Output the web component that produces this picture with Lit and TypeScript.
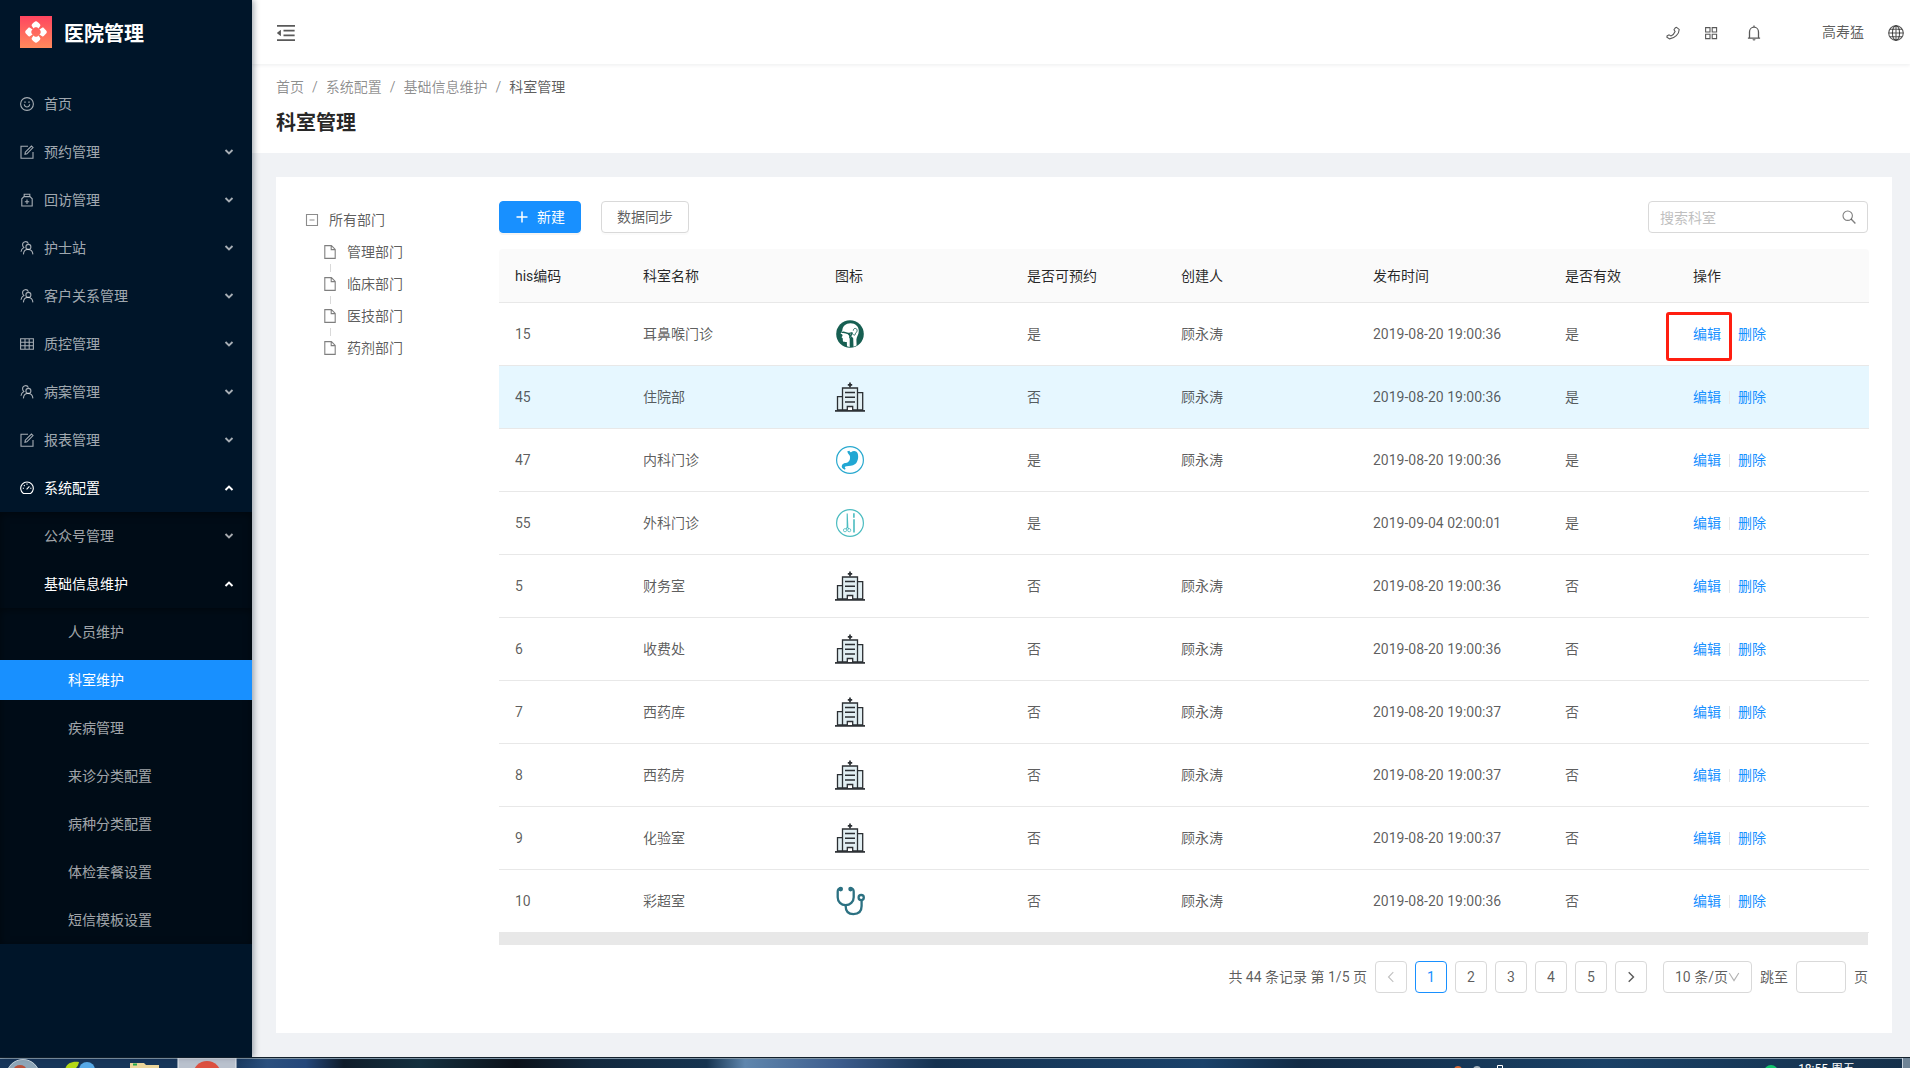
import { LitElement, html, svg, css, nothing } from "lit";
import { customElement, state } from "lit/decorators.js";
import { classMap } from "lit/directives/class-map.js";

type MenuItem = {
  label: string;
  icon?: string;
  open?: boolean;
  expandable?: boolean;
  selected?: boolean;
  children?: MenuItem[];
};

const MENU: MenuItem[] = [
  { label: "首页", icon: "smile" },
  { label: "预约管理", icon: "form", expandable: true },
  { label: "回访管理", icon: "kit", expandable: true },
  { label: "护士站", icon: "team", expandable: true },
  { label: "客户关系管理", icon: "team", expandable: true },
  { label: "质控管理", icon: "table", expandable: true },
  { label: "病案管理", icon: "team", expandable: true },
  { label: "报表管理", icon: "form", expandable: true },
  {
    label: "系统配置",
    icon: "dashboard",
    expandable: true,
    open: true,
    children: [
      { label: "公众号管理", expandable: true },
      {
        label: "基础信息维护",
        expandable: true,
        open: true,
        children: [
          { label: "人员维护" },
          { label: "科室维护", selected: true },
          { label: "疾病管理" },
          { label: "来诊分类配置" },
          { label: "病种分类配置" },
          { label: "体检套餐设置" },
          { label: "短信模板设置" },
        ],
      },
    ],
  },
];

type Row = {
  code: string;
  name: string;
  icon: string;
  bookable: string;
  creator: string;
  time: string;
  valid: string;
};

const T36 = "2019-08-20 19:00:36";
const T37 = "2019-08-20 19:00:37";
const ROWS: Row[] = [
  { code: "15", name: "耳鼻喉门诊", icon: "ent", bookable: "是", creator: "顾永涛", time: T36, valid: "是" },
  { code: "45", name: "住院部", icon: "hospital", bookable: "否", creator: "顾永涛", time: T36, valid: "是" },
  { code: "47", name: "内科门诊", icon: "stomach", bookable: "是", creator: "顾永涛", time: T36, valid: "是" },
  { code: "55", name: "外科门诊", icon: "surgery", bookable: "是", creator: "", time: "2019-09-04 02:00:01", valid: "是" },
  { code: "5", name: "财务室", icon: "hospital", bookable: "否", creator: "顾永涛", time: T36, valid: "否" },
  { code: "6", name: "收费处", icon: "hospital", bookable: "否", creator: "顾永涛", time: T36, valid: "否" },
  { code: "7", name: "西药库", icon: "hospital", bookable: "否", creator: "顾永涛", time: T37, valid: "否" },
  { code: "8", name: "西药房", icon: "hospital", bookable: "否", creator: "顾永涛", time: T37, valid: "否" },
  { code: "9", name: "化验室", icon: "hospital", bookable: "否", creator: "顾永涛", time: T37, valid: "否" },
  { code: "10", name: "彩超室", icon: "steth", bookable: "否", creator: "顾永涛", time: T36, valid: "否" },
];

const COLUMNS = ["his编码", "科室名称", "图标", "是否可预约", "创建人", "发布时间", "是否有效", "操作"];

const line = (w: number, h: number, body: unknown) => html`<svg
  width=${w}
  height=${h}
  viewBox="0 0 ${w} ${h}"
  fill="none"
  stroke="currentColor"
  stroke-width="1.1"
  aria-hidden="true"
>${body}</svg>`;

const ICONS: Record<string, unknown> = {
  smile: line(14, 14, svg`<circle cx="7" cy="7" r="6.4"/><path d="M4.2 7.4C4.6 9 5.6 10 7 10s2.4-1 2.8-2.6"/><path d="M4.3 5.2h1.4M8.3 5.2h1.4" stroke-width="1.3"/>`),
  form: line(14, 14, svg`<path d="M8 1.2H1v12h12V7"/><path d="M5 9.2l.3-2L11.4 1l1.6 1.6L6.9 8.8z"/>`),
  kit: line(14, 14, svg`<path d="M1.8 13V5.8L4 3.6h6l2.2 2.2V13zM4.2 3.4V1.2h5.6v2.2M4.8 8.8h4.4M7 6.6V11"/>`),
  team: line(14, 14, svg`<path d="M2.6 3.8a3 3 0 0 1 5.8-1.2M2.6 3.8a3 3 0 0 0 1.2 2.6C2.2 7.2 1.2 8.8 1 10.8"/><circle cx="8.4" cy="5.9" r="2.5"/><path d="M3.4 13.4c.2-3 1.8-4.9 4.4-4.900 3 0 4.900 2 5.100 4.900"/>`),
  table: line(14, 14, svg`<path d="M.6 1.700h12.800v10.600H.6zM.6 5.200h12.800M.6 8.700h12.800M5 1.700v10.600M9.200 1.700v10.600"/>`),
  dashboard: line(14, 14, svg`<path d="M3.400 12.500a6.300 6.300 0 1 1 7.200 0z"/><path d="M6.600 8.400l2.800-3M2.800 7.300h1.200M10.200 7.300h1.200M7 2.600v1.200M3.900 4.200l.8.8"/>`),
  down: html`<svg width="10" height="10" viewBox="0 0 10 10" fill="none" stroke="currentColor" stroke-width="1.900" aria-hidden="true"><path d="M1.500 3L5 6.400 8.500 3"/></svg>`,
  up: html`<svg width="10" height="10" viewBox="0 0 10 10" fill="none" stroke="currentColor" stroke-width="2" aria-hidden="true"><path d="M1.500 7L5 3.600 8.500 7"/></svg>`,
  fold: html`<svg width="18" height="16" viewBox="112 160 800 704" fill="currentColor" aria-hidden="true"><path d="M408 442h480c4.400 0 8-3.600 8-8v-56c0-4.400-3.600-8-8-8H408c-4.400 0-8 3.600-8 8v56c0 4.400 3.600 8 8 8zm-8 204c0 4.400 3.600 8 8 8h480c4.400 0 8-3.600 8-8v-56c0-4.400-3.600-8-8-8H408c-4.400 0-8 3.600-8 8v56zM904 160H120c-4.400 0-8 3.600-8 8v56c0 4.400 3.600 8 8 8h784c4.400 0 8-3.600 8-8v-56c0-4.400-3.600-8-8-8zm0 632H120c-4.400 0-8 3.600-8 8v56c0 4.400 3.600 8 8 8h784c4.400 0 8-3.600 8-8v-56c0-4.400-3.600-8-8-8zM115.400 518.900L271.700 642c5.800 4.600 14.400.5 14.400-6.900V388.900c0-7.400-8.500-11.500-14.400-6.900L115.400 505.100a8.740 8.740 0 0 0 0 13.800z"/></svg>`,
  phone: line(14, 14, svg`<path d="M9.400 1.800l1.100-.5 2.700 2.100c-.1 4.600-4.400 9-9.600 9.500L.9 11.300l.2-1.400 1.900-1.100 1.900 1.100c1.900-.7 3.400-2.300 4.200-4.400L8 3.800z"/>`),
  grid: line(14, 14, svg`<path d="M1.600 1.600h4.400V6H1.600zM8.200 1.600h4.400V6H8.200zM1.600 8.200h4.400v4.400H1.600zM8.200 8.200h4.400v4.400H8.200z"/>`),
  bell: line(14, 16, svg`<path d="M2.500 13V7a4.500 4.800 0 0 1 9 0v6M.9 13.100h12.200M7 .4v1.800" stroke-width="1.300"/><path d="M5.500 14.200a1.500 1.300 0 0 0 3 0z" fill="currentColor" stroke="none"/>`),
  globe: line(16, 16, svg`<circle cx="8" cy="8" r="7.300"/><ellipse cx="8" cy="8" rx="3.600" ry="7.300"/><path d="M8 .7v14.600M.7 8h14.600M1.800 4.300h12.400M1.800 11.700h12.400"/>`),
  minus: line(14, 14, svg`<path d="M1.500 1.500h11v11h-11zM4.500 7h5"/>`),
  file: line(12, 14, svg`<path d="M.8.600h6.600l3.800 3.800v9H.8zM7.200.600v4h4"/>`),
  plus: html`<svg width="12" height="12" viewBox="0 0 12 12" fill="none" stroke="currentColor" stroke-width="1.500" aria-hidden="true"><path d="M6 .5v11M.5 6h11"/></svg>`,
  search: line(14, 14, svg`<circle cx="5.700" cy="5.700" r="4.700"/><path d="M9.100 9.100l4.300 4.300" stroke-width="1.400"/>`),
  left: line(12, 12, svg`<path d="M8.300 1.200L3.500 6l4.800 4.800"/>`),
  right: line(12, 12, svg`<path d="M3.700 1.200L8.500 6l-4.800 4.800" stroke-width="1.400"/>`),
  caret: line(12, 12, svg`<path d="M1.200 2L6 9.600 10.800 2"/>`),
  logo: html`<svg width="32" height="32" viewBox="0 0 32 32" aria-hidden="true">
    <defs><linearGradient id="lg" x1="0" y1="0" x2="0" y2="1"><stop offset="0" stop-color="#ff4560"/><stop offset="1" stop-color="#ff8a5c"/></linearGradient></defs>
    <rect width="32" height="32" fill="url(#lg)"/>
    <g fill="#fff">
      <path id="petal" d="M16 5.200c1.200 0 2.400 1.400 4 3 .5.600.5 1.200.2 1.700l-1.700 2.700c-.6-.8-1.500-1.300-2.500-1.300s-1.900.5-2.500 1.300l-1.700-2.700c-.3-.5-.3-1.100.2-1.700 1.600-1.600 2.800-3 4-3z"/>
      <use href="#petal" transform="rotate(90 16 16)"/>
      <use href="#petal" transform="rotate(180 16 16)"/>
      <use href="#petal" transform="rotate(270 16 16)"/>
    </g></svg>`,
  hospital: html`<svg width="30" height="30" viewBox="0 0 30 30" fill="none" stroke="#2b2f33" stroke-width="1.300" aria-hidden="true">
    <path d="M2.500 28V14.600h5V28zM22.500 28V10.600h5.200V28zM7.500 28V6h15v22z" fill="#e2eff3"/>
    <path d="M15 .5v5M12.800 2.800h4.400" stroke-width="1.700"/>
    <path d="M10 10.600h10M10 15.200h10M10 19.900h10" stroke-width="1.500"/>
    <path d="M12.300 28.500v-4h5.400v4" fill="#fff"/><path d="M0 28.900h30" stroke-width="1.700"/></svg>`,
  ent: html`<svg width="30" height="30" viewBox="0 0 30 30" aria-hidden="true">
    <circle cx="15" cy="15" r="13.800" fill="#175f52"/>
    <path d="M15.500 4.200c4.900 0 8.300 3.200 8.300 7.700 0 3.600-2.200 5.600-2.400 8.500l.2 6.100-3.100 1.200-.3-8.500-1.700-1.900-1.800 1.900v8.700l-2.700-.7-.2-4.300c-1.700.1-3.700.2-3.900-.8l-.2-2.900-1.200-.9 1.100-1.600-.5-1.400-1.500-.6 1.700-3.300C7.600 7.200 10.800 4.200 15.500 4.200z" fill="#fff"/>
    <path d="M6.500 13.500c3-1 4.400.6 6.500.9 1.700.2 2.700-.7 4.500-.7M14.800 14.200v5M13 14.500l2.500 2.700 2-3" fill="none" stroke="#175f52" stroke-width="1.300"/>
    <path d="M18.300 11.600c0-3 4-2.800 3.800 0-.1 1.900-1.700 2-1.900 3.700-.3 1.300-1.600 1.200-1.900.1" fill="#fff" stroke="#175f52" stroke-width=".9"/></svg>`,
  stomach: html`<svg width="30" height="30" viewBox="0 0 30 30" aria-hidden="true">
    <circle cx="15" cy="15" r="13.400" fill="#fff" stroke="#29a9cf" stroke-width="1.200"/>
    <path d="M12.300 6.300l2.300-.5c.1 1.200.8 1.700 1.800 1.200 1.600-1.700 5.100-1.600 6.200 1.200 1.300 3.700.3 8.500-2.400 10.900-2.800 2.300-6 1.900-8.700 2.100-1.800.2-2.300 1.600-.8 2.300l-.8 1.200C7 23.700 6.100 21.500 7.100 19.900c1.400-2.400 4.400-1.500 6-2.900 1.600-1.300 2.200-3.400 1.900-5.600-.2-1.900-2.400-2.300-2.700-5.100z" fill="#22a7d3"/></svg>`,
  surgery: html`<svg width="30" height="30" viewBox="0 0 30 30" fill="none" stroke="#4bbcc0" aria-hidden="true">
    <circle cx="15" cy="15" r="13.400" fill="#fff" stroke-width="1.200"/>
    <path d="M12.200 5.500v13.600M12.200 5.500l.6 13-1.800 2.300M12 18.500l1.800 2.300" stroke-width="1.100"/>
    <circle cx="10" cy="22.200" r="1.600" stroke-width=".8"/><circle cx="14.200" cy="22.200" r="1.600" stroke-width=".8"/>
    <path d="M18.900 5.200v4.600M19 11.200v13.300" stroke-width="1.600"/></svg>`,
  steth: html`<svg width="30" height="30" viewBox="0 0 30 30" fill="none" stroke="#2c7182" stroke-width="2.300" stroke-linecap="round" aria-hidden="true">
    <path d="M5.300 2.700C2.900 2.700 2.700 3.700 2.700 5.800v5.400c0 4.600 3.400 8 7.900 8s8.100-3.400 8.100-8V5.800c0-2.100-.3-3.100-2.700-3.100"/>
    <path d="M10.600 19.400c0 5.700 2.800 8.700 7.800 8.700 5.400 0 8.200-3 8.200-8v-5"/>
    <circle cx="5.700" cy="3.100" r="1.200" fill="#2c7182"/><circle cx="15.600" cy="3.100" r="1.200" fill="#2c7182"/><circle cx="26.200" cy="11.600" r="2.600"/></svg>`,
};

const FONT = css`Roboto, "Noto Sans CJK SC", sans-serif`;

@customElement("side-menu")
export class SideMenu extends LitElement {
  static styles = css`
    :host { display: block; font-family: ${FONT}; font-size: 14px; color: rgba(255, 255, 255, 0.65); }
    .logo { display: flex; align-items: center; gap: 12px; height: 64px; padding-left: 20px; color: #fff; text-decoration: none; }
    .logo svg { flex: none; }
    .title { margin: 4px 0 0; font-size: 20px; line-height: 32px; font-weight: 600; }
    .menu, .sub { list-style: none; margin: 0; padding: 0; }
    .menu { padding: 16px 0; }
    .entry { padding: 4px 0; }
    .item { display: flex; align-items: center; gap: 10px; box-sizing: border-box; width: 100%; height: 40px; padding: 0 18px 0 20px; border: 0; background: none; color: inherit; font: inherit; line-height: 40px; text-align: left; text-decoration: none; cursor: pointer; }
    .item svg { flex: none; }
    .text { flex: 1; }
    .level2 { padding-left: 44px; }
    .level3 { padding-left: 68px; }
    .open { color: #fff; }
    .selected { background: #1890ff; color: #fff; }
    .sub { background: #000c17; box-shadow: inset 0 2px 8px rgba(0, 0, 0, 0.45); }
  `;

  private entry(item: MenuItem, level: number): unknown {
    const cls = classMap({
      item: true,
      [`level${level}`]: true,
      open: !!item.open,
      selected: !!item.selected,
    });
    const body = html`${item.icon ? ICONS[item.icon] : nothing}<span class="text">${item.label}</span>`;
    return html`<li>
      <div class="entry">
        ${item.expandable
          ? html`<button class=${cls} type="button" aria-expanded=${item.open ? "true" : "false"}>${body}${ICONS[item.open ? "up" : "down"]}</button>`
          : html`<a class=${cls} href="#" aria-current=${item.selected ? "page" : nothing}>${body}</a>`}
      </div>
      ${item.children ? html`<ul class="sub">${item.children.map((c) => this.entry(c, level + 1))}</ul>` : nothing}
    </li>`;
  }

  render() {
    return html`
      <a class="logo" href="#">${ICONS.logo}<h1 class="title">医院管理</h1></a>
      <nav><ul class="menu">${MENU.map((m) => this.entry(m, 1))}</ul></nav>
    `;
  }
}

@customElement("dept-tree")
export class DeptTree extends LitElement {
  static styles = css`
    :host { display: block; font-family: ${FONT}; font-size: 14px; line-height: 24px; color: rgba(0, 0, 0, 0.65); }
    ul { list-style: none; margin: 0; padding: 0; }
    .root { padding: 3px 0 0 5px; }
    .node { display: flex; align-items: center; height: 24px; padding: 4px 0; gap: 11px; color: inherit; text-decoration: none; }
    .root-node { gap: 10px; }
    .toggle { display: flex; padding: 0; border: 0; background: none; color: rgba(0, 0, 0, 0.45); cursor: pointer; }
    .child { padding-left: 19px; }
    .child .node svg { color: rgba(0, 0, 0, 0.5); }
    .child li { background-image: linear-gradient(#d9d9d9, #d9d9d9), linear-gradient(#d9d9d9, #d9d9d9); background-position: 6px 100%, 6px 0; background-size: 1px 4px; background-repeat: no-repeat; }
    .child li:first-child { background-size: 1px 4px, 0 0; }
    .child li:last-child { background-size: 0 0, 1px 4px; }
  `;

  render() {
    return html`<ul class="root">
      <li>
        <div class="node root-node"><button class="toggle" type="button" aria-label="折叠">${ICONS.minus}</button>所有部门</div>
        <ul class="child">
          ${["管理部门", "临床部门", "医技部门", "药剂部门"].map(
            (n) => html`<li><a class="node" href="#">${ICONS.file}${n}</a></li>`
          )}
        </ul>
      </li>
    </ul>`;
  }
}

@customElement("dept-table")
export class DeptTable extends LitElement {
  static styles = css`
    :host { display: block; font-family: ${FONT}; font-size: 14px; line-height: 22px; color: rgba(0, 0, 0, 0.65); }
    table { width: 100%; table-layout: fixed; border-collapse: separate; border-spacing: 0; }
    th, td { padding: 0 16px; text-align: left; border-bottom: 1px solid #e8e8e8; }
    th { height: 53px; background: #fafafa; color: rgba(0, 0, 0, 0.85); font-weight: 400; }
    th:first-child { border-top-left-radius: 4px; }
    th:last-child { border-top-right-radius: 4px; }
    td { height: 62px; }
    td svg { display: block; }
    .active td { background: #e6f7ff; }
    .narrow { width: 128px; }
    .wide { width: 192px; }
    .mid { width: 154px; }
    .actions { display: inline-flex; align-items: center; position: relative; }
    .actions a { color: #1890ff; text-decoration: none; }
    .rule { width: 1px; height: 13px; margin: 0 8px; background: #e8e8e8; }
    .mark { position: absolute; left: -27px; top: -11px; width: 60px; height: 43px; border: 3px solid #ff1e10; border-radius: 3px; pointer-events: none; }
    .scroll { height: 12px; background: #e8e8e8; }
  `;

  render() {
    return html`<table>
        <colgroup>
          <col class="narrow" /><col class="wide" /><col class="wide" /><col class="mid" />
          <col class="wide" /><col class="wide" /><col class="narrow" /><col class="wide" />
        </colgroup>
        <thead><tr>${COLUMNS.map((c) => html`<th scope="col">${c}</th>`)}</tr></thead>
        <tbody>
          ${ROWS.map(
            (r, i) => html`<tr class=${classMap({ active: i === 1 })}>
              <td>${r.code}</td><td>${r.name}</td><td>${ICONS[r.icon]}</td><td>${r.bookable}</td>
              <td>${r.creator}</td><td>${r.time}</td><td>${r.valid}</td>
              <td><span class="actions"><a href="#">编辑</a><span class="rule"></span><a href="#">删除</a>${i === 0 ? html`<span class="mark"></span>` : nothing}</span></td>
            </tr>`
          )}
        </tbody>
      </table>
      <div class="scroll"></div>`;
  }
}

@customElement("page-nav")
export class PageNav extends LitElement {
  @state() private page = 1;

  static styles = css`
    :host { display: flex; justify-content: flex-end; align-items: center; gap: 8px; font-family: ${FONT}; font-size: 14px; line-height: 32px; color: rgba(0, 0, 0, 0.65); }
    button, select, input { box-sizing: border-box; height: 32px; margin: 0; border: 1px solid #d9d9d9; border-radius: 4px; background: #fff; color: inherit; font: inherit; }
    button { display: flex; align-items: center; justify-content: center; width: 32px; padding: 0; cursor: pointer; }
    button:disabled { color: rgba(0, 0, 0, 0.25); }
    .current { border-color: #1890ff; color: #1890ff; }
    .size { display: grid; align-items: center; margin-left: 8px; width: 89px; }
    .size select, .size svg { grid-area: 1 / 1; }
    .size select { width: 100%; padding: 0 11px; line-height: 22px; appearance: none; }
    .size svg { justify-self: end; margin-right: 12px; color: rgba(0, 0, 0, 0.3); pointer-events: none; }
    .jump { display: flex; gap: 8px; }
    .jump input { width: 50px; padding: 0 11px; }
  `;

  render() {
    return html`<span>共 44 条记录 第 1/5 页</span>
      <button type="button" disabled aria-label="上一页">${ICONS.left}</button>
      ${[1, 2, 3, 4, 5].map(
        (n) => html`<button type="button" class=${classMap({ current: n === this.page })} @click=${() => (this.page = n)}>${n}</button>`
      )}
      <button type="button" aria-label="下一页">${ICONS.right}</button>
      <span class="size"><select aria-label="每页条数"><option>10 条/页</option></select>${ICONS.caret}</span>
      <label class="jump">跳至<input type="text" />页</label>`;
  }
}

@customElement("task-bar")
export class TaskBar extends LitElement {
  static styles = css`
    :host { display: flex; align-items: flex-start; box-sizing: border-box; height: 11px; overflow: hidden; border-top: 1px solid #14212c; box-shadow: inset 0 1px #7f95a6; font-family: ${FONT}; font-size: 12px; line-height: 12px; color: #fff;
      background: linear-gradient(90deg, #17365a 0, #17365a 12%, #2b507e 14%, #24477a 16%, #0f1c2a 18%, #14303f 22%, #0b1119 27%, #12283d 31%, #163450 37%, #5f86ad 39%, #3c5c8c 44%, #153250 49%, #1a426a 63%, #122b45 68%, #1a4166 84%, #15304a 100%); }
    svg { flex: none; }
    .space { flex: 1; }
    .clock { margin: 5px 47px 0 18px; white-space: nowrap; }
    .peek { width: 7px; height: 11px; border-left: 1px solid #c5d0da; background: #6f8496; }
  `;

  render() {
    return html`<svg width="240" height="10" viewBox="0 0 240 10" aria-hidden="true">
        <circle cx="23" cy="18" r="16.5" fill="#8ea6b8" stroke="#c9d6df" />
        <ellipse cx="20" cy="11" rx="6" ry="4" fill="#b9513b" />
        <path d="M65 12c1-6 6-9 14-8-1 5-4 8-8 8z" fill="#b5d916" />
        <circle cx="87" cy="12" r="8" fill="#56a8e6" />
        <path d="M130 10V5h14l2 2h13v3z" fill="#ecd59a" /><path d="M133 5.5h4v2h-4z" fill="#22a94a" />
        <rect x="178" width="58" height="12" fill="#b9c1cd" stroke="#e9edf2" />
        <circle cx="207" cy="17" r="14" fill="#dc5040" />
      </svg>
      <span class="space"></span>
      <svg width="350" height="10" viewBox="0 0 350 10" aria-hidden="true">
        <circle cx="28" cy="12" r="4" fill="#d96a35" /><circle cx="47" cy="12" r="4" fill="#a9b5be" />
        <path d="M67.5 10V7.500h5V10" fill="none" stroke="#fff" />
        <circle cx="341" cy="14" r="7" fill="#12c46c" />
      </svg>
      <span class="clock">18:55 周五</span>
      <span class="peek"></span>`;
  }
}

@customElement("app-root")
export class AppRoot extends LitElement {
  static styles = css`
    :host { display: flex; flex-direction: column; min-height: 100vh; background: #f0f2f5; font-family: ${FONT}; font-size: 14px; line-height: 22px; color: rgba(0, 0, 0, 0.65); }
    .layout { flex: 1; display: flex; }
    .side { flex: none; width: 252px; background: #001529; box-shadow: 2px 0 6px rgba(0, 21, 41, 0.35); z-index: 2; }
    .main { flex: 1; min-width: 0; display: flex; flex-direction: column; }
    .top { display: flex; align-items: center; height: 64px; padding: 2px 6px 0 25px; box-sizing: border-box; background: #fff; box-shadow: 0 1px 4px rgba(0, 21, 41, 0.08); z-index: 1; }
    .bare { display: flex; padding: 0; border: 0; background: none; color: inherit; font: inherit; text-decoration: none; cursor: pointer; }
    .tools { display: flex; align-items: center; gap: 24px; margin-left: auto; }
    .icons { display: flex; align-items: center; gap: 24px; }
    .icons .bell { margin-left: 5px; }
    .user { margin-left: 37px; padding-bottom: 2px; }
    .head { padding: 12px 24px 14px; background: #fff; }
    .crumbs { display: flex; gap: 8px; }
    .crumbs a, .crumbs i { color: rgba(0, 0, 0, 0.45); font-style: normal; text-decoration: none; }
    .title { margin: 9px 0 0; font-size: 20px; line-height: 32px; font-weight: 600; color: rgba(0, 0, 0, 0.85); }
    .card { flex: 1; display: flex; margin: 24px 18px 24px 24px; padding: 24px; background: #fff; }
    .tree { flex: none; width: 199px; }
    .content { flex: 1; min-width: 0; }
    .bar { display: flex; gap: 20px; margin-bottom: 16px; }
    .btn { display: flex; align-items: center; gap: 8px; box-sizing: border-box; height: 32px; padding: 0 15px; border: 1px solid #d9d9d9; border-radius: 4px; background: #fff; color: inherit; font: inherit; box-shadow: 0 2px rgba(0, 0, 0, 0.015); cursor: pointer; }
    .primary { gap: 9px; padding: 0 15px 0 16px; border-color: #1890ff; background: #1890ff; color: #fff; box-shadow: 0 2px rgba(0, 0, 0, 0.045); }
    .search { display: flex; align-items: center; box-sizing: border-box; width: 220px; height: 32px; margin-left: auto; padding: 0 11px; border: 1px solid #d9d9d9; border-radius: 4px; }
    .search input { flex: 1; min-width: 0; padding: 2px 0 0; border: 0; outline: 0; background: none; font: inherit; color: inherit; }
    .search input::placeholder { color: #bfbfbf; }
    .search svg { color: rgba(0, 0, 0, 0.5); }
    page-nav { margin-top: 16px; }
  `;

  render() {
    return html`
      <div class="layout">
        <aside class="side"><side-menu></side-menu></aside>
        <div class="main">
          <header class="top">
            <button class="bare" type="button" aria-label="收起菜单">${ICONS.fold}</button>
            <div class="tools">
              <div class="icons">
                <button class="bare" type="button" aria-label="电话">${ICONS.phone}</button>
                <button class="bare" type="button" aria-label="应用">${ICONS.grid}</button>
                <button class="bare bell" type="button" aria-label="通知">${ICONS.bell}</button>
              </div>
              <a class="bare user" href="#">高寿猛</a>
              <button class="bare" type="button" aria-label="语言">${ICONS.globe}</button>
            </div>
          </header>
          <div class="head">
            <nav class="crumbs">
              <a href="#">首页</a><i>/</i><a href="#">系统配置</a><i>/</i><a href="#">基础信息维护</a><i>/</i><span>科室管理</span>
            </nav>
            <h2 class="title">科室管理</h2>
          </div>
          <main class="card">
            <dept-tree class="tree"></dept-tree>
            <section class="content">
              <div class="bar">
                <button class="btn primary" type="button">${ICONS.plus}新建</button>
                <button class="btn" type="button">数据同步</button>
                <label class="search"><input type="text" placeholder="搜索科室" aria-label="搜索科室" />${ICONS.search}</label>
              </div>
              <dept-table></dept-table>
              <page-nav></page-nav>
            </section>
          </main>
        </div>
      </div>
      <task-bar></task-bar>
    `;
  }
}
